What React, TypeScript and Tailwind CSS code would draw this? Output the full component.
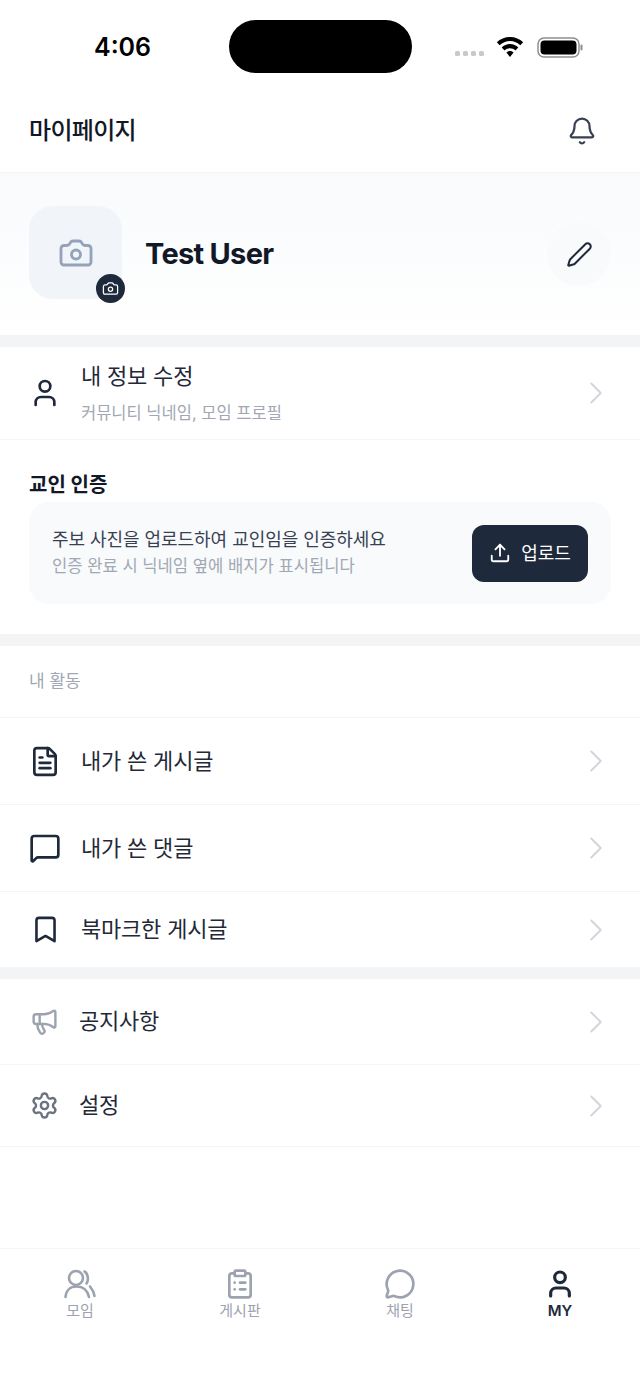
import {
  Bell,
  Bookmark,
  Camera,
  ChevronRight,
  ClipboardList,
  FileText,
  Megaphone,
  MessageCircle,
  MessageSquare,
  Pen,
  Settings,
  Upload,
  User,
} from "lucide-react";

const font = "font-['Inter','Noto_Sans_CJK_KR',sans-serif]";

function StatusBar() {
  return (
    <div className="h-[88px] flex items-start pt-[20px] pl-[94px] bg-white">
      <div className="w-[135px] h-[53px] flex items-center pt-[2px] text-[25px] font-semibold text-black">4:06</div>
      <div className="w-[183px] h-[53px] rounded-[27px] bg-black" />
      <div className="h-[53px] flex items-center ml-[43px] gap-[11px]">
        <div className="flex gap-[3px] mt-[13px]">
          {[0, 1, 2, 3].map((i) => (
            <div key={i} className="w-[5px] h-[5px] rounded-[1.5px] bg-[#c9c9c9]" />
          ))}
        </div>
        <svg width="30" height="24" viewBox="0 0 30 24" className="mr-[1px] mt-[1px]">
          <path d="M15 2C9.8 2 5.2 4 1.8 7.3l2.9 3C7.3 7.7 11 6.1 15 6.1s7.7 1.6 10.3 4.2l2.9-3C24.800 4 20.200 2 15 2z" fill="#000" />
          <path d="M15 9c-3.300 0-6.200 1.300-8.300 3.400l2.900 3c1.400-1.400 3.300-2.200 5.400-2.200s4 .8 5.400 2.200l2.900-3C21.200 10.300 18.300 9 15 9z" fill="#000" />
          <path d="M15 16c-1.500 0-2.700.6-3.600 1.500L15 22l3.600-4.500C17.700 16.600 16.500 16 15 16z" fill="#000" />
        </svg>
        <svg width="47" height="24" viewBox="0 0 47 24">
          <rect x="1" y="3" width="41" height="19" rx="6" fill="none" stroke="#8e8e8e" strokeWidth="1.5" />
          <rect x="3.500" y="5.500" width="36" height="14" rx="4" fill="#000" />
          <rect x="43.500" y="9.500" width="2" height="6" rx="1" fill="#8e8e8e" />
        </svg>
      </div>
    </div>
  );
}

function Divider() {
  return <div className="h-[12px] bg-[#f3f4f6]" />;
}

function Chevron() {
  return <ChevronRight size={38} strokeWidth={1.2} className="text-[#d1d5db]" />;
}

type RowProps = {
  icon: React.ReactNode;
  label: string;
  h: string;
  gap: string;
};

function Row({ icon, label, h, gap }: RowProps) {
  return (
    <div className={`${h} flex items-center pl-[29px] pr-[25px] border-b border-[#f3f4f6]`}>
      <div className="w-[32px] flex justify-center">{icon}</div>
      <div className={`${gap} flex-1 text-[22px] tracking-[-0.2px] text-[#1f2937]`}>{label}</div>
      <Chevron />
    </div>
  );
}

function Tab({ icon, label, active }: { icon: React.ReactNode; label: string; active?: boolean }) {
  return (
    <div className="flex-1 flex flex-col items-center pt-[19px]">
      {icon}
      <span className={`text-[15px] leading-[20px] mt-[1px] ${active ? "font-semibold text-[#1e293b]" : "text-[#9ca3af]"}`}>
        {label}
      </span>
    </div>
  );
}

export default function App() {
  return (
    <div className={`${font} w-[640px] h-[1390px] bg-white flex flex-col overflow-hidden`}>
      <StatusBar />

      <div className="h-[85px] flex items-center justify-between pl-[29px] pr-[43px] pt-[1px] border-b border-[#f3f4f6]">
        <h1 className="text-[24px] font-medium tracking-[-0.7px] text-[#111827]">마이페이지</h1>
        <Bell size={30} strokeWidth={1.8} className="text-[#374151]" />
      </div>

      <div className="h-[162px] flex items-center pl-[29px] pr-[29px] bg-gradient-to-b from-[#f8fafc] to-white">
        <div className="relative w-[93px] h-[93px] rounded-[24px] bg-[#f1f5f9] flex items-center justify-center -mt-[3px]">
          <Camera size={36} strokeWidth={1.9} className="text-[#94a3b8]" />
          <div className="absolute left-[67px] top-[68px] w-[29px] h-[29px] rounded-full bg-[#1e293b] flex items-center justify-center">
            <Camera size={17} strokeWidth={1.8} className="text-white" />
          </div>
        </div>
        <div className="ml-[23px] flex-1 text-[29px] font-bold tracking-[-0.7px] text-[#111827]">Test User</div>
        <div className="w-[64px] h-[64px] rounded-full bg-[#f8fafc] flex items-center justify-center">
          <Pen size={27} strokeWidth={1.8} className="text-[#1e293b]" />
        </div>
      </div>

      <Divider />

      <div className="h-[93px] flex items-center pl-[29px] pr-[25px] border-b border-[#f3f4f6]">
        <div className="w-[32px] flex justify-center">
          <User size={32} strokeWidth={2} className="text-[#1e293b]" />
        </div>
        <div className="ml-[20px] flex-1 -mt-[1px]">
          <div className="text-[22px] leading-[30px] tracking-[-0.2px] text-[#1f2937]">내 정보 수정</div>
          <div className="mt-[10px] text-[16.500px] leading-[24px] text-[#a1a8b3]">커뮤니티 닉네임, 모임 프로필</div>
        </div>
        <Chevron />
      </div>

      <div className="h-[194px] px-[29px] pt-[32px]">
        <div className="text-[20px] leading-[26px] font-bold text-[#111827]">교인 인증</div>
        <div className="mt-[4px] h-[102px] rounded-[20px] bg-[#f8fafc] flex items-center justify-between pl-[23px] pr-[23px]">
          <div>
            <div className="text-[18px] leading-[26px] tracking-[-0.05px] text-[#374151]">주보 사진을 업로드하여 교인임을 인증하세요</div>
            <div className="text-[16.600px] leading-[26px] text-[#a1a8b3]">인증 완료 시 닉네임 옆에 배지가 표시됩니다</div>
          </div>
          <div className="w-[116px] h-[57px] rounded-[12px] bg-[#1e293b] flex items-center justify-center gap-[10px] text-white text-[18px]">
            <Upload size={22} strokeWidth={2} />
            업로드
          </div>
        </div>
      </div>

      <Divider />

      <div className="h-[72px] flex items-center pl-[29px] pt-[1px] text-[17px] text-[#a1a8b3] border-b border-[#f3f4f6]">내 활동</div>
      <Row h="h-[87px]" gap="ml-[20px]" label="내가 쓴 게시글" icon={<FileText size={33} strokeWidth={2} className="text-[#1e293b]" />} />
      <Row h="h-[87px]" gap="ml-[20px]" label="내가 쓴 댓글" icon={<MessageSquare size={34} strokeWidth={2} className="text-[#1e293b]" />} />
      <div className="h-[75px] flex items-center pl-[29px] pr-[25px]">
        <div className="w-[32px] flex justify-center">
          <Bookmark size={31} strokeWidth={2} className="text-[#1e293b]" />
        </div>
        <div className="ml-[20px] flex-1 text-[22px] tracking-[-0.2px] text-[#1f2937]">북마크한 게시글</div>
        <Chevron />
      </div>

      <Divider />

      <Row h="h-[86px]" gap="ml-[18px]" label="공지사항" icon={<Megaphone size={29} strokeWidth={2} className="text-[#9ca3af] -translate-x-[1px]" />} />
      <Row h="h-[82px]" gap="ml-[18px]" label="설정" icon={<Settings size={29} strokeWidth={2} className="text-[#6b7280] -translate-x-[1px]" />} />

      <div className="flex-1" />

      <div className="h-[142px] flex px-0 border-t border-[#f3f4f6]">
        <Tab
          label="모임"
          icon={
            <svg width="32" height="32" viewBox="0 0 32 32" fill="none" stroke="#9ca3af" strokeWidth="2.600" strokeLinecap="round">
              <circle cx="12" cy="10" r="7" />
              <path d="M1.500 29C2 22.500 6 18.500 12.500 18.500S23.500 22.500 25 29" />
              <path d="M20.500 3.500C24 5.500 25 12 22.500 15.500" />
              <path d="M26 18.500C28.500 21.500 30 25 30.500 28" />
            </svg>
          }
        />
        <Tab label="게시판" icon={<ClipboardList size={32} strokeWidth={2} className="text-[#9ca3af]" />} />
        <Tab label="채팅" icon={<MessageCircle size={32} strokeWidth={2} className="text-[#9ca3af]" />} />
        <Tab label="MY" active icon={<User size={32} strokeWidth={2.4} className="text-[#1e293b]" />} />
      </div>
    </div>
  );
}
